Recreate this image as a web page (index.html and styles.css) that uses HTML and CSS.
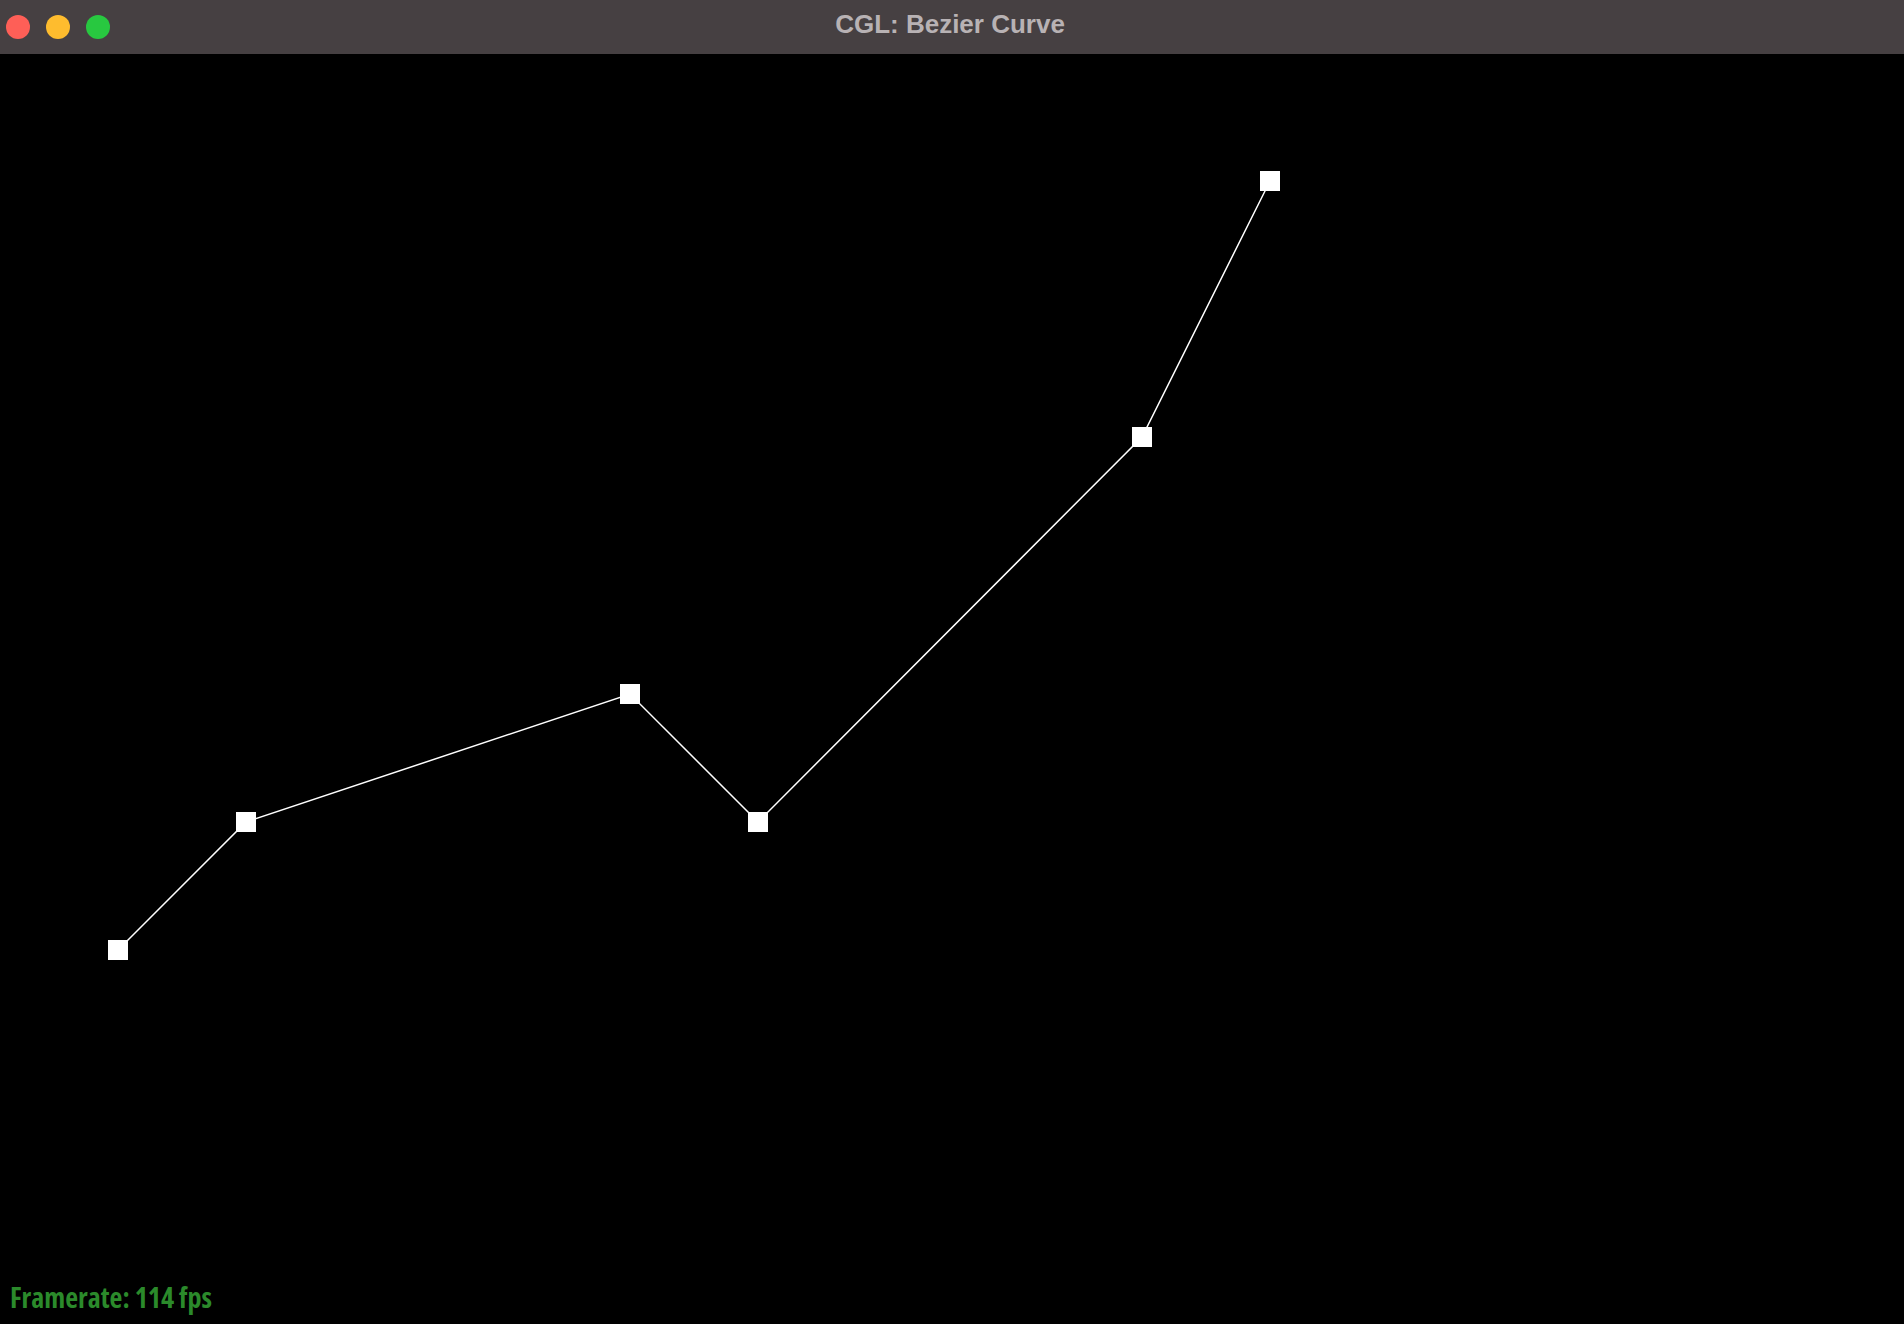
FILE: index.html
```html
<!DOCTYPE html>
<html>
<head>
<meta charset="utf-8">
<link rel="stylesheet" href="styles.css">
</head>
<body>
<div class="window">
  <div class="titlebar">
    <div class="lights">
      <span class="light red"></span>
      <span class="light yellow"></span>
      <span class="light green"></span>
    </div>
    <div class="title">CGL: Bezier Curve</div>
  </div>
  <div class="canvas">
    <svg class="scene" width="1904" height="1270" viewBox="0 54 1904 1270">
      <polyline points="118,950 246,822 630,694 758,822 1142,437 1270,181" fill="none" stroke="#fff" stroke-width="1.5"/>
      <rect x="108" y="940" width="20" height="20" fill="#fff"/>
      <rect x="236" y="812" width="20" height="20" fill="#fff"/>
      <rect x="620" y="684" width="20" height="20" fill="#fff"/>
      <rect x="748" y="812" width="20" height="20" fill="#fff"/>
      <rect x="1132" y="427" width="20" height="20" fill="#fff"/>
      <rect x="1260" y="171" width="20" height="20" fill="#fff"/>
    </svg>
    <div class="fps">Framerate: 114 fps</div>
  </div>
</div>
</body>
</html>
```
FILE: styles.css
```css
html, body {
  margin: 0;
  padding: 0;
  background: #000;
  overflow: hidden;
}
.window {
  width: 1904px;
  height: 1324px;
  display: flex;
  flex-direction: column;
}
.titlebar {
  height: 54px;
  flex: 0 0 54px;
  background: #464042;
  display: flex;
  align-items: center;
  position: relative;
}
.lights {
  display: flex;
  gap: 16px;
  padding-left: 6px;
}
.light {
  width: 24px;
  height: 24px;
  border-radius: 50%;
  display: block;
}
.red { background: #fe5f57; }
.yellow { background: #febc2e; }
.green { background: #28c840; }
.title {
  position: absolute;
  left: 0;
  right: 0;
  top: 0;
  bottom: 0;
  display: flex;
  align-items: center;
  justify-content: center;
  font-family: "Liberation Sans", Arial, sans-serif;
  font-weight: bold;
  font-size: 26px;
  color: #b8b2b4;
  padding-right: 4px;
  padding-bottom: 5px;
}
.canvas {
  flex: 1;
  position: relative;
  background: #000;
}
.scene {
  display: block;
}
.fps {
  position: absolute;
  left: 10px;
  bottom: 9px;
  font-family: "Open Sans", "Noto Sans", sans-serif;
  font-stretch: 75%;
  font-weight: bold;
  font-size: 28px;
  color: #2b8a2b;
  line-height: 1.3;
}
```
